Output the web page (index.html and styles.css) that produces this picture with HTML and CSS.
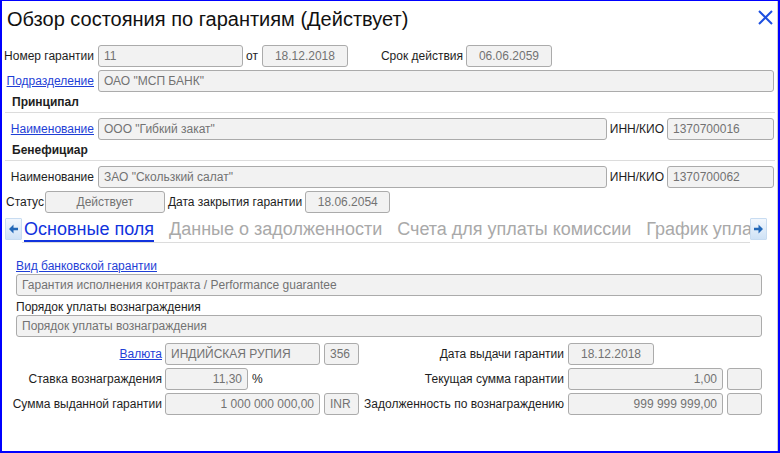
FILE: index.html
```html
<!DOCTYPE html>
<html lang="ru">
<head>
<meta charset="utf-8">
<title>Обзор состояния по гарантиям</title>
<link rel="stylesheet" href="styles.css">
</head>
<body>
<div class="window">
  <div class="inner">
    <div class="header">
      <h1 class="title">Обзор состояния по гарантиям (Действует)</h1>
      <svg class="close" width="15" height="15" viewBox="0 0 15 15"><path d="M1 1 L14 14 M14 1 L1 14" stroke="#1d4fe0" stroke-width="2" fill="none"/></svg>
    </div>

    <div class="row row-first">
      <div class="lc"><span>Номер гарантии</span></div>
      <div class="field w-num">11</div>
      <span class="lbl lbl-ot">от</span>
      <div class="field center w-date">18.12.2018</div>
      <span class="lbl lbl-term">Срок действия</span>
      <div class="field center w-date">06.06.2059</div>
    </div>

    <div class="row">
      <div class="lc"><a class="link" href="#">Подразделение</a></div>
      <div class="field grow">ОАО "МСП БАНК"</div>
    </div>

    <div class="sect">Принципал</div>
    <div class="row">
      <div class="lc"><a class="link" href="#">Наименование</a></div>
      <div class="field grow">ООО "Гибкий закат"</div>
      <span class="lbl lbl-inn">ИНН/КИО</span>
      <div class="field w-inn">1370700016</div>
    </div>

    <div class="sect">Бенефициар</div>
    <div class="row">
      <div class="lc"><span>Наименование</span></div>
      <div class="field grow">ЗАО "Скользкий салат"</div>
      <span class="lbl lbl-inn">ИНН/КИО</span>
      <div class="field w-inn">1370700062</div>
    </div>

    <div class="row row-status">
      <span class="lbl">Статус</span>
      <div class="field center w-status">Действует</div>
      <span class="lbl lbl-close">Дата закрытия гарантии</span>
      <div class="field center w-date2">18.06.2054</div>
    </div>

    <div class="tabs">
      <div class="tab-arrow">
        <svg width="15" height="20" viewBox="0 0 15 20"><path d="M3 10 L7.5 5.5 L7.5 8.8 L12 8.8 L12 11.2 L7.5 11.2 L7.5 14.5 Z" fill="#2368b8"/></svg>
      </div>
      <div class="tablist">
        <div class="tab active">Основные поля</div>
        <div class="tab">Данные о задолженности</div>
        <div class="tab">Счета для уплаты комиссии</div>
        <div class="tab">График уплаты</div>
      </div>
      <div class="tab-arrow">
        <svg width="15" height="20" viewBox="0 0 15 20"><path d="M12 10 L7.5 5.5 L7.5 8.8 L3 8.8 L3 11.2 L7.5 11.2 L7.5 14.5 Z" fill="#2368b8"/></svg>
      </div>
    </div>

    <div class="content">
      <div class="flabel"><a class="link" href="#">Вид банковской гарантии</a></div>
      <div class="field wide">Гарантия исполнения контракта / Performance guarantee</div>
      <div class="flabel flabel-2">Порядок уплаты вознаграждения</div>
      <div class="field wide">Порядок уплаты вознаграждения</div>

      <div class="grow-row grow-row-first">
        <div class="glabel"><a class="link" href="#">Валюта</a></div>
        <div class="field w-cur">ИНДИЙСКАЯ РУПИЯ</div>
        <div class="field w-code">356</div>
        <div class="rlabel">Дата выдачи гарантии</div>
        <div class="rgroup"><div class="field center w-date3">18.12.2018</div></div>
      </div>
      <div class="grow-row">
        <div class="glabel">Ставка вознаграждения</div>
        <div class="field right w-rate">11,30</div>
        <span class="pct">%</span>
        <div class="rlabel">Текущая сумма гарантии</div>
        <div class="rgroup"><div class="field right w-sum">1,00</div><div class="field w-small"></div></div>
      </div>
      <div class="grow-row">
        <div class="glabel">Сумма выданной гарантии</div>
        <div class="field right w-cur">1 000 000 000,00</div>
        <div class="field w-code">INR</div>
        <div class="rlabel">Задолженность по вознаграждению</div>
        <div class="rgroup"><div class="field right w-sum">999 999 999,00</div><div class="field w-small"></div></div>
      </div>
    </div>
  </div>
</div>
</body>
</html>
```

FILE: styles.css
```css
* { box-sizing: border-box; }
html, body { margin: 0; padding: 0; background: #fff; }
body {
  width: 780px;
  height: 453px;
  overflow: hidden;
  font-family: "Liberation Sans", Arial, sans-serif;
  font-size: 12px;
  color: #1e1e1e;
}
.window {
  width: 780px;
  height: 453px;
  border: 2px solid #0000ff;
  border-top-width: 1px;
}
.inner {
  height: 100%;
  padding: 0 2px 0 3px;
  border-right: 1px solid #cfcfcf;
}
.header {
  height: 36px;
  display: flex;
  align-items: center;
  justify-content: space-between;
  padding-left: 2px;
}
.title {
  margin: 0;
  font-size: 20px;
  font-weight: normal;
  color: #111;
  line-height: 36px;
}
.close { margin-right: 2px; margin-top: -4px; }

.row {
  display: flex;
  align-items: center;
  height: 22px;
  margin-top: 3px;
  padding: 0 1px 0 2px;
}
.row-first { margin-top: 8px; }
.lc {
  width: 91px;
  flex: none;
  display: flex;
  justify-content: flex-end;
  padding-right: 4px;
  white-space: nowrap;
}
.lbl { white-space: nowrap; flex: none; }
.link { color: #1f3fd6; text-decoration: underline; white-space: nowrap; }

.field {
  height: 22px;
  line-height: 20px;
  background: #f2f2f2;
  border: 1px solid #ababab;
  border-radius: 3px;
  color: #727272;
  padding: 0 5px;
  white-space: nowrap;
  overflow: hidden;
  flex: none;
}
.center { text-align: center; }
.right { text-align: right; }
.grow { flex: 1; }
.w-num { width: 145px; }
.w-date { width: 86px; }
.lbl-ot { margin: 0 4px 0 3px; }
.lbl-term { margin: 0 3px 0 33px; }
.lbl-inn { margin: 0 3px; }
.w-inn { width: 107px; }

.sect {
  height: 21px;
  border-bottom: 1px solid #dcdcdc;
  font-weight: bold;
  display: flex;
  align-items: center;
  padding-left: 7px;
  margin-bottom: 5px;
}
.sect + .row { margin-top: 0; }

.row-status { padding-left: 1px; }
.w-status { width: 120px; margin-left: 1px; }
.lbl-close { margin: 0 3px; }
.w-date2 { width: 85px; }

.tabs {
  display: flex;
  height: 25px;
  margin-top: 5px;
  margin-right: 8px;
}
.tab-arrow {
  width: 17px;
  height: 22px;
  flex: none;
  background: linear-gradient(#f2f7fd, #cfe2f6);
  border: 1px solid #c8dcf1;
  border-radius: 1px;
  display: flex;
  align-items: center;
  justify-content: center;
}
.tablist {
  flex: 1;
  display: flex;
  overflow: hidden;
  border-bottom: 1px solid #dcdcdc;
  padding-left: 2px;
}
.tab {
  font-size: 18px;
  color: #a9a9a9;
  white-space: nowrap;
  line-height: 22px;
  height: 24px;
  margin-right: 15px;
  flex: none;
}
.tab.active {
  color: #1133dd;
  border-bottom: 2px solid #1133dd;
}

.content {
  padding: 0 13px 0 11px;
}
.flabel {
  height: 16px;
  line-height: 16px;
  margin-top: 15px;
  white-space: nowrap;
}
.flabel-2 { margin-top: 3px; }
.wide { width: 100%; }

.grow-row {
  display: flex;
  align-items: center;
  height: 22px;
  margin-top: 3px;
}
.grow-row-first { margin-top: 6px; }
.glabel {
  width: 149px;
  flex: none;
  display: flex;
  justify-content: flex-end;
  padding-right: 3px;
  white-space: nowrap;
}
.w-cur { width: 155px; }
.w-code { width: 35px; margin-left: 4px; }
.w-rate { width: 83px; }
.pct { margin-left: 4px; }
.rlabel {
  flex: 1;
  display: flex;
  justify-content: flex-end;
  padding-right: 4px;
  white-space: nowrap;
}
.rgroup {
  width: 194px;
  flex: none;
  display: flex;
}
.w-date3 { width: 86px; }
.w-sum { width: 155px; }
.w-small { width: 35px; margin-left: 4px; }
```
